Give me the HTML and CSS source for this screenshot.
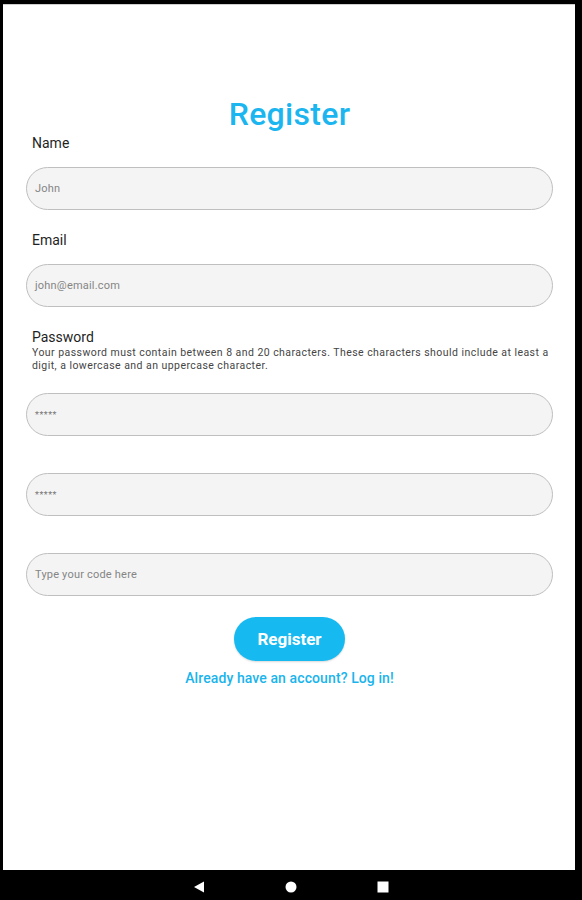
FILE: index.html
```html
<!DOCTYPE html>
<html lang="en">
<head>
<meta charset="utf-8">
<title>Register</title>
<link rel="stylesheet" href="styles.css">
</head>
<body>
<div class="device">
  <div class="screen">
    <h1 class="title">Register</h1>

    <div class="label">Name</div>
    <div class="field"><span class="ph">John</span></div>

    <div class="label label-gap">Email</div>
    <div class="field"><span class="ph">john@email.com</span></div>

    <div class="label label-gap">Password</div>
    <p class="helper">Your password must contain between 8 and 20 characters. These characters should include at least a<br>digit, a lowercase and an uppercase character.</p>
    <div class="field field-pw"><span class="ph ph-stars">*****</span></div>

    <div class="field field-spaced"><span class="ph ph-stars">*****</span></div>

    <div class="field field-spaced"><span class="ph">Type your code here</span></div>

    <div class="actions">
      <button class="btn" type="button">Register</button>
      <a class="login" href="#">Already have an account? Log in!</a>
    </div>
  </div>
  <nav class="nav">
    <svg class="nav-icon" width="12" height="12" viewBox="0 0 12 12"><polygon points="11,0.5 11,11.5 1,6" fill="#fff"/></svg>
    <svg class="nav-icon" width="12" height="12" viewBox="0 0 12 12"><circle cx="6" cy="6" r="5.5" fill="#fff"/></svg>
    <svg class="nav-icon" width="12" height="12" viewBox="0 0 12 12"><rect x="0.5" y="0.5" width="11" height="11" fill="#fff"/></svg>
  </nav>
</div>
</body>
</html>
```
FILE: styles.css
```css
* { box-sizing: border-box; }
html, body { margin: 0; padding: 0; }
body {
  background: #000;
  font-family: Roboto, "Noto Sans", "Liberation Sans", sans-serif;
  color: #1f1f1f;
}
.device {
  width: 582px;
  height: 900px;
  display: flex;
  flex-direction: column;
}
.screen {
  flex: 1;
  margin: 4px 7px 0 3px;
  background: #fff;
  border-top: 1px solid #cfcfcf;
  padding: 0 22px 0 23px;
  display: flex;
  flex-direction: column;
}
.title {
  margin: 90px 0 0;
  font-size: 32px;
  line-height: 38px;
  font-weight: 500;
  letter-spacing: 0.3px;
  color: #1bb5ef;
  text-align: center;
}
.label {
  margin-top: 2px;
  padding-left: 6px;
  font-size: 14px;
  line-height: 16px;
  color: #1f1f1f;
}
.label-gap { margin-top: 22px; }
.helper {
  margin: 1px 0 0;
  padding-left: 6px;
  font-size: 10.5px;
  line-height: 13px;
  letter-spacing: 0.45px;
  color: #454545;
  white-space: nowrap;
}
.field {
  margin-top: 16px;
  height: 43px;
  border: 1px solid #bfbfbf;
  border-radius: 22px;
  background: #f4f4f4;
  display: flex;
  align-items: center;
  padding-left: 8px;
}
.field-pw { margin-top: 21px; }
.field-spaced { margin-top: 37px; }
.ph {
  font-size: 11px;
  letter-spacing: 0.2px;
  color: #858585;
}
.ph-stars {
  font-size: 9px;
  letter-spacing: 0.5px;
  color: #777;
}
.actions {
  margin-top: 21px;
  display: flex;
  flex-direction: column;
  align-items: center;
}
.btn {
  width: 111px;
  height: 44px;
  border: none;
  border-radius: 22px;
  background: #16baf1;
  color: #fff;
  font-family: Roboto, "Noto Sans", sans-serif;
  font-size: 17px;
  font-weight: 700;
  box-shadow: 0 1px 2px rgba(0,0,0,0.15);
  padding: 0;
}
.login {
  margin-top: 9px;
  font-size: 14px;
  line-height: 16px;
  font-weight: 500;
  letter-spacing: 0.1px;
  color: #1ab4ec;
  text-decoration: none;
}
.nav {
  height: 30px;
  display: flex;
  justify-content: center;
  align-items: center;
  gap: 80px;
  padding-top: 4px;
}
.nav-icon { display: block; }
```
